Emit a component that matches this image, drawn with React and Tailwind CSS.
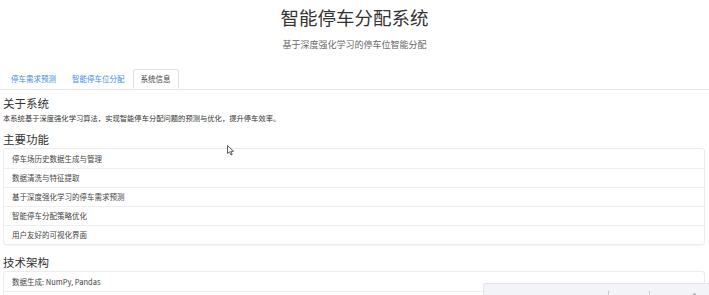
import React from 'react';

const font = { fontFamily: '"Noto Sans CJK SC", "Liberation Sans", sans-serif' };

const features = [
  '停车场历史数据生成与管理',
  '数据清洗与特征提取',
  '基于深度强化学习的停车需求预测',
  '智能停车分配策略优化',
  '用户友好的可视化界面',
];

const tabs = ['停车需求预测', '智能停车位分配', '系统信息'];

const App = () => {
  return (
    <div className="relative w-[709px] h-[295px] overflow-hidden bg-white text-[#333]" style={font}>
      <div className="flex flex-col items-center pt-[4px]">
        <h1 className="text-[18.5px] leading-[26px] text-[#333]">智能停车分配系统</h1>
        <p className="mt-[9px] text-[9px] leading-[12px] text-[#666]">基于深度强化学习的停车位智能分配</p>
      </div>

      <div className="mt-[18px] flex pl-[3px] border-b border-[#e5e5e5]">
        {tabs.map((t, i) =>
          i === 2 ? (
            <div key={t} className="-mb-px px-[7px] h-[20px] flex items-center text-[7.5px] text-[#444] bg-white border border-[#e3e3e3] border-b-white rounded-t-[3px]">
              {t}
            </div>
          ) : (
            <div key={t} className="px-[8px] h-[20px] flex items-center text-[7.5px] text-[#3a8ee6]">
              {t}
            </div>
          )
        )}
      </div>

      <div className="px-[3px]">
        <h2 className="mt-[6px] text-[11.5px] leading-[14px] text-[#333]">关于系统</h2>
        <p className="mt-[3px] text-[7.3px] leading-[10px] text-[#333]">
          本系统基于深度强化学习算法，实现智能停车分配问题的预测与优化，提升停车效率。
        </p>

        <h2 className="mt-[9px] text-[11.5px] leading-[14px] text-[#333]">主要功能</h2>
        <ul className="mt-[2px] w-[702px] border border-[#ececec] rounded-[3px] shadow-[0_1px_1px_rgba(0,0,0,0.04)]">
          {features.map((f, i) => (
            <li key={f} className={`h-[19px] flex items-center pl-[8px] text-[7.5px] text-[#444] ${i > 0 ? 'border-t border-[#efefef]' : ''}`}>
              {f}
            </li>
          ))}
        </ul>

        <h2 className="mt-[10px] text-[11.5px] leading-[14px] text-[#333]">技术架构</h2>
        <ul className="mt-[2px] w-[702px] border border-[#ececec] rounded-[3px]">
          <li className="h-[19px] flex items-center pl-[8px] text-[7.5px] text-[#444]">数据生成: NumPy, Pandas</li>
          <li className="h-[19px] border-t border-[#efefef]" />
        </ul>
      </div>

      <div className="absolute left-[483px] top-[283px] w-[230px] h-[20px] bg-[#f3f4f7] border border-[#e3e5ea] rounded-tl-[2px] flex items-start">
        <div className="ml-[124px] mt-[7px] w-px h-[6px] bg-[#c8c8c8]" />
        <div className="ml-[40px] mt-[7px] w-px h-[6px] bg-[#c8c8c8]" />
        <div className="ml-[43px] mt-[9px] w-[3px] h-[3px] rounded-full bg-[#b5b5b5]" />
      </div>

      <svg className="absolute left-[227px] top-[145px]" width="8" height="11" viewBox="0 0 8 11">
        <path d="M0.5 0.5 L0.5 8.5 L2.5 6.8 L4 10 L5.2 9.4 L3.8 6.3 L6.5 6.3 Z" fill="white" stroke="#333" strokeWidth="0.8" />
      </svg>
    </div>
  );
};

export default App;
